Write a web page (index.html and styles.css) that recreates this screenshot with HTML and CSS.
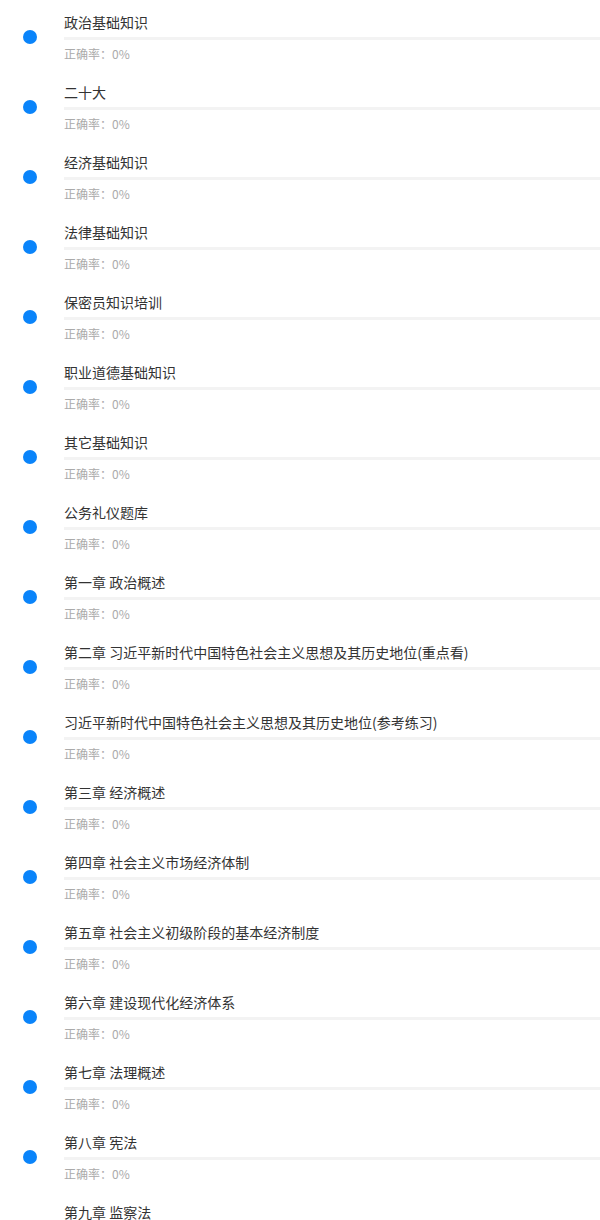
FILE: index.html
```html
<!DOCTYPE html>
<html lang="zh">
<head>
<meta charset="utf-8">
<link rel="stylesheet" href="styles.css">
</head>
<body>
<div class="list">
  <div class="item"><span class="dot"></span><div class="content"><div class="title">政治基础知识</div><div class="divider"></div><div class="rate">正确率：0%</div></div></div>
  <div class="item"><span class="dot"></span><div class="content"><div class="title">二十大</div><div class="divider"></div><div class="rate">正确率：0%</div></div></div>
  <div class="item"><span class="dot"></span><div class="content"><div class="title">经济基础知识</div><div class="divider"></div><div class="rate">正确率：0%</div></div></div>
  <div class="item"><span class="dot"></span><div class="content"><div class="title">法律基础知识</div><div class="divider"></div><div class="rate">正确率：0%</div></div></div>
  <div class="item"><span class="dot"></span><div class="content"><div class="title">保密员知识培训</div><div class="divider"></div><div class="rate">正确率：0%</div></div></div>
  <div class="item"><span class="dot"></span><div class="content"><div class="title">职业道德基础知识</div><div class="divider"></div><div class="rate">正确率：0%</div></div></div>
  <div class="item"><span class="dot"></span><div class="content"><div class="title">其它基础知识</div><div class="divider"></div><div class="rate">正确率：0%</div></div></div>
  <div class="item"><span class="dot"></span><div class="content"><div class="title">公务礼仪题库</div><div class="divider"></div><div class="rate">正确率：0%</div></div></div>
  <div class="item"><span class="dot"></span><div class="content"><div class="title">第一章 政治概述</div><div class="divider"></div><div class="rate">正确率：0%</div></div></div>
  <div class="item"><span class="dot"></span><div class="content"><div class="title">第二章 习近平新时代中国特色社会主义思想及其历史地位(重点看)</div><div class="divider"></div><div class="rate">正确率：0%</div></div></div>
  <div class="item"><span class="dot"></span><div class="content"><div class="title">习近平新时代中国特色社会主义思想及其历史地位(参考练习)</div><div class="divider"></div><div class="rate">正确率：0%</div></div></div>
  <div class="item"><span class="dot"></span><div class="content"><div class="title">第三章 经济概述</div><div class="divider"></div><div class="rate">正确率：0%</div></div></div>
  <div class="item"><span class="dot"></span><div class="content"><div class="title">第四章 社会主义市场经济体制</div><div class="divider"></div><div class="rate">正确率：0%</div></div></div>
  <div class="item"><span class="dot"></span><div class="content"><div class="title">第五章 社会主义初级阶段的基本经济制度</div><div class="divider"></div><div class="rate">正确率：0%</div></div></div>
  <div class="item"><span class="dot"></span><div class="content"><div class="title">第六章 建设现代化经济体系</div><div class="divider"></div><div class="rate">正确率：0%</div></div></div>
  <div class="item"><span class="dot"></span><div class="content"><div class="title">第七章 法理概述</div><div class="divider"></div><div class="rate">正确率：0%</div></div></div>
  <div class="item"><span class="dot"></span><div class="content"><div class="title">第八章 宪法</div><div class="divider"></div><div class="rate">正确率：0%</div></div></div>
  <div class="item"><span class="dot"></span><div class="content"><div class="title">第九章 监察法</div><div class="divider"></div><div class="rate">正确率：0%</div></div></div>
</div>
</body>
</html>
```
FILE: styles.css
```css
html, body {
  margin: 0;
  padding: 0;
  background: #ffffff;
}
body {
  font-family: "Noto Sans CJK SC", "Noto Sans", sans-serif;
  overflow: hidden;
}
.list {
  display: flex;
  flex-direction: column;
}
.item {
  display: flex;
  align-items: flex-start;
  height: 70px;
}
.dot {
  flex: none;
  width: 14px;
  height: 14px;
  border-radius: 50%;
  background: #0a84fa;
  margin: 30px 27px 0 23px;
}
.content {
  flex: 1;
  padding-top: 12px;
}
.title {
  font-size: 14px;
  line-height: 20px;
  color: #333333;
  white-space: nowrap;
}
.divider {
  height: 3px;
  background: #f3f3f3;
  margin-top: 5px;
}
.rate {
  font-size: 12px;
  line-height: 16px;
  color: #aaaaaa;
  margin-top: 6px;
}
```
